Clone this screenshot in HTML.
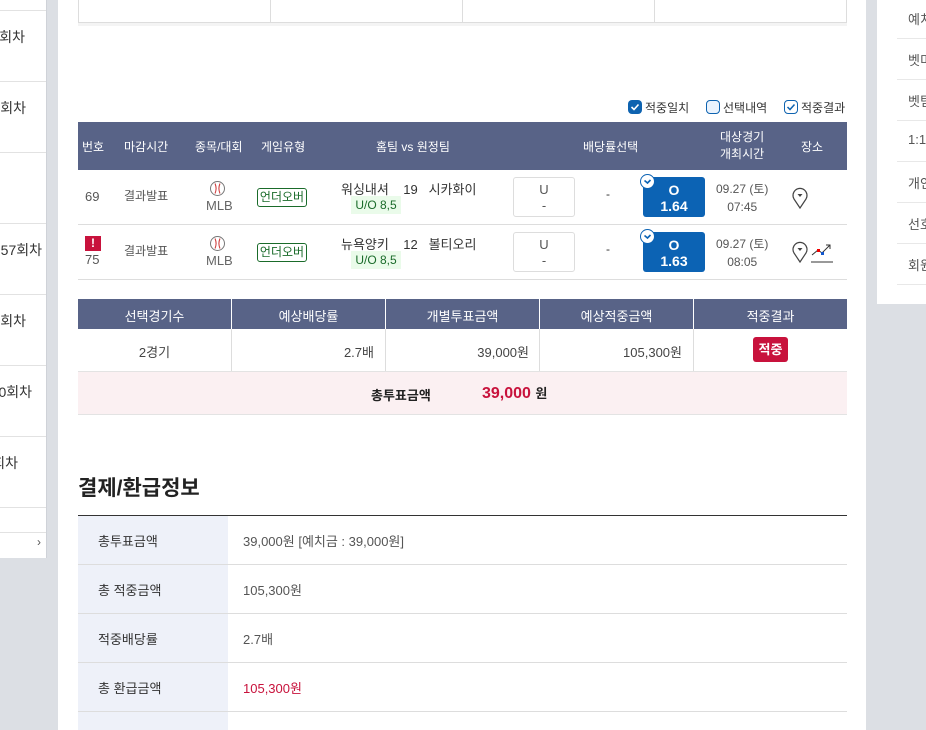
<!DOCTYPE html>
<html><head><meta charset="utf-8"><style>
*{margin:0;padding:0;box-sizing:border-box}
body{width:926px;height:730px;overflow:hidden;background:#dcdfe4;font-family:"Liberation Sans","Noto Sans CJK KR",sans-serif;font-size:12px;color:#444;position:relative}
.abs{position:absolute}
.side{left:0;top:0;width:47px;height:558px;background:#fff;border-right:1px solid #cfd2d8}
.side .ln{position:absolute;left:0;width:46px;border-top:1px solid #e2e2e2}
.side .t{position:absolute;right:20px;font-size:14px;color:#333;white-space:nowrap}
.main{left:58px;top:0;width:808px;height:730px;background:#fff}
.right{left:877px;top:0;width:49px;height:304px;background:#fff}
.right .ln{position:absolute;left:20px;width:29px;border-top:1px solid #e8e8e8}
.right .t{position:absolute;left:31px;font-size:13px;color:#555;white-space:nowrap}
.hdr{background:#586387;color:#fff}
.c{position:absolute;text-align:center;white-space:nowrap}
.vline{position:absolute;border-left:1px solid #ddd}
.hline{position:absolute;border-top:1px solid #ddd}
.cb{position:absolute;width:14px;height:14px;border-radius:4px}
</style></head><body>
<div class="abs side">
 <div class="ln" style="top:10px"></div>
 <div class="ln" style="top:81px"></div><div class="ln" style="top:152px"></div><div class="ln" style="top:223px"></div><div class="ln" style="top:294px"></div><div class="ln" style="top:365px"></div><div class="ln" style="top:436px"></div><div class="ln" style="top:507px"></div><div class="ln" style="top:532px"></div>
 <div class="t" style="top:27px;right:21px">56회차</div>
 <div class="t" style="top:98px;right:20px">회차</div>
 <div class="t" style="top:240px;right:4px">57회차</div>
 <div class="t" style="top:311px;right:20px">회차</div>
 <div class="t" style="top:382px;right:14px">0회차</div>
 <div class="t" style="top:453px;right:28px">회차</div>
 <div class="t" style="top:535px;right:5px;font-size:12px;color:#555">›</div>
</div>
<div class="abs right">
 <div class="t" style="top:9px">예치</div><div class="ln" style="top:38px"></div>
 <div class="t" style="top:50px">벳미</div><div class="ln" style="top:79px"></div>
 <div class="t" style="top:91px">벳팀</div><div class="ln" style="top:120px"></div>
 <div class="t" style="top:132px">1:1</div><div class="ln" style="top:161px"></div>
 <div class="t" style="top:173px">개인</div><div class="ln" style="top:202px"></div>
 <div class="t" style="top:214px">선호</div><div class="ln" style="top:243px"></div>
 <div class="t" style="top:255px">회원</div><div class="ln" style="top:284px"></div>
</div>
<div class="abs main"></div>

<div class="vline" style="left:78px;top:0;height:22px"></div>
<div class="vline" style="left:270px;top:0;height:22px"></div>
<div class="vline" style="left:462px;top:0;height:22px"></div>
<div class="vline" style="left:654px;top:0;height:22px"></div>
<div class="vline" style="left:846px;top:0;height:22px"></div>
<div class="abs" style="left:78px;top:22px;width:769px;height:4px;background:#f4f4f4;border-top:1px solid #ddd"></div>

<div class="cb" style="left:628px;top:100px;background:#0e63b0"><svg width="14" height="14"><path d="M3.5 7l2.5 2.5 4.5-5" stroke="#fff" stroke-width="1.6" fill="none"/></svg></div>
<div class="c" style="left:645px;top:99px;font-size:12px;color:#333">적중일치</div>
<div class="cb" style="left:706px;top:100px;border:1px solid #0e63b0;background:#eaf3fd"></div>
<div class="c" style="left:723px;top:99px;color:#333">선택내역</div>
<div class="cb" style="left:784px;top:100px;border:1px solid #0e63b0;background:#fff"><svg width="12" height="12"><path d="M2.5 6l2.5 2.5 4.5-5" stroke="#0e63b0" stroke-width="1.5" fill="none"/></svg></div>
<div class="c" style="left:801px;top:99px;color:#333">적중결과</div>

<div class="abs hdr" style="left:78px;top:122px;width:769px;height:48px"></div>
<div class="c" style="left:82px;top:138px;color:#fff">번호</div>
<div class="c" style="left:124px;top:138px;color:#fff">마감시간</div>
<div class="c" style="left:195px;top:138px;color:#fff">종목/대회</div>
<div class="c" style="left:261px;top:138px;color:#fff">게임유형</div>
<div class="c" style="left:376px;top:138px;color:#fff">홈팀 vs 원정팀</div>
<div class="c" style="left:583px;top:138px;color:#fff">배당률선택</div>
<div class="c" style="left:720px;top:129px;color:#fff;line-height:17px">대상경기<br>개최시간</div>
<div class="c" style="left:801px;top:138px;color:#fff">장소</div>

<div class="hline" style="left:78px;top:224px;width:769px"></div>
<div class="hline" style="left:78px;top:279px;width:769px"></div>

<div class="c" style="left:85px;top:189px;font-size:13px;color:#555">69</div>
<div class="abs" style="left:85px;top:236px;width:16px;height:15px;background:#c8123c;color:#fff;font-weight:bold;text-align:center;font-size:12px;line-height:15px">!</div>
<div class="c" style="left:85px;top:252px;font-size:13px;color:#555">75</div>
<div class="c" style="left:124px;top:187px;color:#555">결과발표</div>
<div class="c" style="left:124px;top:242px;color:#555">결과발표</div>

<svg class="abs" style="left:209px;top:180px" width="17" height="17"><circle cx="8.5" cy="8.5" r="7" stroke="#777" fill="#fff"/><path d="M6 3.5q2.2 5 0 10M11 3.5q-2.2 5 0 10" stroke="#c33" fill="none"/></svg>
<div class="c" style="left:206px;top:198px;color:#666;font-size:13px">MLB</div>
<svg class="abs" style="left:209px;top:235px" width="17" height="17"><circle cx="8.5" cy="8.5" r="7" stroke="#777" fill="#fff"/><path d="M6 3.5q2.2 5 0 10M11 3.5q-2.2 5 0 10" stroke="#c33" fill="none"/></svg>
<div class="c" style="left:206px;top:253px;color:#666;font-size:13px">MLB</div>

<div class="abs" style="left:257px;top:188px;width:50px;height:19px;border:1px solid #1a6b2a;border-radius:3px;color:#1a6b2a;text-align:center;line-height:17px">언더오버</div>
<div class="abs" style="left:257px;top:243px;width:50px;height:19px;border:1px solid #1a6b2a;border-radius:3px;color:#1a6b2a;text-align:center;line-height:17px">언더오버</div>

<div class="c" style="left:341px;top:179px;font-size:13px;color:#333">워싱내셔&nbsp;&nbsp;&nbsp; 19 &nbsp;&nbsp;시카화이</div>
<div class="abs" style="left:351px;top:196px;width:50px;height:18px;background:#eafbea;color:#1a6b2a;text-align:center;line-height:18px;font-size:12px">U/O 8,5</div>
<div class="c" style="left:341px;top:234px;font-size:13px;color:#333">뉴욕양키&nbsp;&nbsp;&nbsp; 12 &nbsp;&nbsp;볼티오리</div>
<div class="abs" style="left:351px;top:251px;width:50px;height:18px;background:#eafbea;color:#1a6b2a;text-align:center;line-height:18px;font-size:12px">U/O 8,5</div>

<div class="abs" style="left:513px;top:177px;width:62px;height:40px;border:1px solid #ddd;border-radius:3px;text-align:center;color:#555;font-size:13px;line-height:16px;padding-top:4px">U<br>-</div>
<div class="abs" style="left:513px;top:232px;width:62px;height:40px;border:1px solid #ddd;border-radius:3px;text-align:center;color:#555;font-size:13px;line-height:16px;padding-top:4px">U<br>-</div>
<div class="c" style="left:606px;top:187px;color:#333">-</div>
<div class="c" style="left:606px;top:242px;color:#333">-</div>

<div class="abs" style="left:643px;top:177px;width:62px;height:40px;background:#0c63b4;border-radius:3px;text-align:center;color:#fff;font-size:14px;font-weight:bold;line-height:16px;padding-top:5px">O<br>1.64</div>
<div class="abs" style="left:640px;top:174px;width:15px;height:15px;border-radius:50%;background:#fff;border:1px solid #0c63b4"><svg width="13" height="13"><path d="M3.5 5.5l3 2.5 3-3" stroke="#0c63b4" stroke-width="1.6" fill="none"/></svg></div>
<div class="abs" style="left:643px;top:232px;width:62px;height:40px;background:#0c63b4;border-radius:3px;text-align:center;color:#fff;font-size:14px;font-weight:bold;line-height:16px;padding-top:5px">O<br>1.63</div>
<div class="abs" style="left:640px;top:229px;width:15px;height:15px;border-radius:50%;background:#fff;border:1px solid #0c63b4"><svg width="13" height="13"><path d="M3.5 5.5l3 2.5 3-3" stroke="#0c63b4" stroke-width="1.6" fill="none"/></svg></div>

<div class="c" style="left:716px;top:180px;color:#555;line-height:18px;text-align:center">09.27 (토)<br>07:45</div>
<div class="c" style="left:716px;top:235px;color:#555;line-height:18px;text-align:center">09.27 (토)<br>08:05</div>

<svg class="abs" style="left:792px;top:186px" width="18" height="24"><path d="M8 22L2 13a7 7 0 1 1 12 0z" stroke="#444" fill="#fff" stroke-width="1.2"/><path d="M5.5 8h5l-2.5 3z" fill="#444"/></svg>
<svg class="abs" style="left:792px;top:240px" width="18" height="24"><path d="M8 22L2 13a7 7 0 1 1 12 0z" stroke="#444" fill="#fff" stroke-width="1.2"/><path d="M5.5 8h5l-2.5 3z" fill="#444"/></svg>
<svg class="abs" style="left:811px;top:242px" width="22" height="22"><path d="M1 13l6-5 4 3 8-8M15 3h4v4" stroke="#333" fill="none" stroke-width="1"/><rect x="6" y="7" width="3" height="3" fill="#e00"/><rect x="10" y="10" width="3" height="3" fill="#15c"/><path d="M0 20h22" stroke="#333"/></svg>

<div class="abs hdr" style="left:78px;top:299px;width:769px;height:30px"></div>
<div class="abs" style="left:231px;top:299px;height:30px;border-left:1px solid #fff"></div>
<div class="abs" style="left:385px;top:299px;height:30px;border-left:1px solid #fff"></div>
<div class="abs" style="left:539px;top:299px;height:30px;border-left:1px solid #fff"></div>
<div class="abs" style="left:693px;top:299px;height:30px;border-left:1px solid #fff"></div>
<div class="c" style="left:78px;width:153px;top:306px;color:#fff;font-size:13px">선택경기수</div>
<div class="c" style="left:232px;width:153px;top:306px;color:#fff;font-size:13px">예상배당률</div>
<div class="c" style="left:386px;width:153px;top:306px;color:#fff;font-size:13px">개별투표금액</div>
<div class="c" style="left:540px;width:153px;top:306px;color:#fff;font-size:13px">예상적중금액</div>
<div class="c" style="left:694px;width:153px;top:306px;color:#fff;font-size:13px">적중결과</div>
<div class="vline" style="left:231px;top:329px;height:42px"></div>
<div class="vline" style="left:385px;top:329px;height:42px"></div>
<div class="vline" style="left:539px;top:329px;height:42px"></div>
<div class="vline" style="left:693px;top:329px;height:42px"></div>
<div class="c" style="left:78px;width:153px;top:342px;font-size:13px">2경기</div>
<div class="c" style="left:232px;width:142px;top:342px;font-size:13px;text-align:right">2.7배</div>
<div class="c" style="left:386px;width:143px;top:342px;font-size:13px;text-align:right">39,000원</div>
<div class="c" style="left:540px;width:142px;top:342px;font-size:13px;text-align:right">105,300원</div>
<div class="abs" style="left:753px;top:337px;width:35px;height:25px;background:#c8123c;border-radius:3px;color:#fff;font-weight:bold;font-size:13px;text-align:center;line-height:25px">적중</div>
<div class="abs" style="left:78px;top:371px;width:769px;height:44px;background:#fbf0f2;border-top:1px solid #e3e3e3;border-bottom:1px solid #e3e3e3"></div>
<div class="c" style="left:371px;top:385px;font-size:13px;font-weight:bold;color:#222">총투표금액</div>
<div class="c" style="left:482px;top:383px;font-size:16px;font-weight:bold;color:#c8123c">39,000 <span style="color:#222;font-size:13px">원</span></div>

<div class="c" style="left:78px;top:472px;font-size:21px;font-weight:bold;color:#222">결제/환급정보</div>
<div class="abs" style="left:78px;top:515px;width:769px;border-top:1px solid #333"></div>
<div class="abs" style="left:78px;top:516px;width:150px;height:214px;background:#eef1f9"></div>
<div class="hline" style="left:78px;top:564px;width:769px"></div>
<div class="hline" style="left:78px;top:613px;width:769px"></div>
<div class="hline" style="left:78px;top:662px;width:769px"></div>
<div class="hline" style="left:78px;top:711px;width:769px"></div>
<div class="c" style="left:98px;top:531px;font-size:13px;color:#333">총투표금액</div>
<div class="c" style="left:243px;top:531px;font-size:13px;color:#555">39,000원 [예치금 : 39,000원]</div>
<div class="c" style="left:98px;top:580px;font-size:13px;color:#333">총 적중금액</div>
<div class="c" style="left:243px;top:580px;font-size:13px;color:#555">105,300원</div>
<div class="c" style="left:98px;top:629px;font-size:13px;color:#333">적중배당률</div>
<div class="c" style="left:243px;top:629px;font-size:13px;color:#555">2.7배</div>
<div class="c" style="left:98px;top:678px;font-size:13px;color:#333">총 환급금액</div>
<div class="c" style="left:243px;top:678px;font-size:13px;color:#c8123c">105,300원</div>
</body></html>
